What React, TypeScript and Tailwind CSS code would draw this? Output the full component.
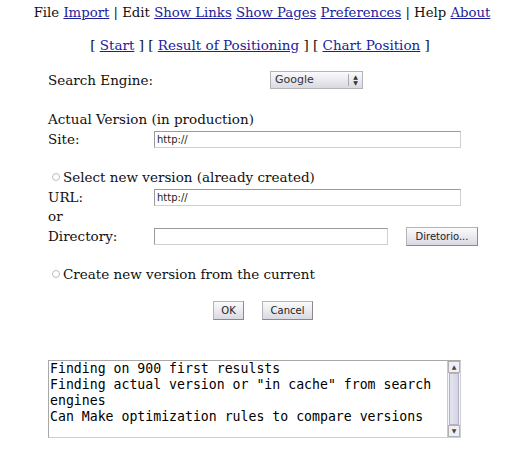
import React from "react";

const serif = "font-['DejaVu_Serif','Liberation_Serif',serif]";
const ui = "font-['DejaVu_Sans',sans-serif]";

function Field({ width, value }: { width: string; value?: string }) {
  return (
    <div
      className={`${width} h-[17px] border border-[#9a9a9a] border-r-[#d0d0d0] border-b-[#d0d0d0] bg-white px-[2px] text-[10px] leading-[15px] text-[#222] ${ui}`}
    >
      {value}
    </div>
  );
}

function Btn({ label, width }: { label: string; width: string }) {
  return (
    <div
      className={`${width} h-[19px] flex items-center justify-center border border-[#b4b4b4] border-b-[#8a8a8a] border-r-[#8a8a8a] bg-gradient-to-b from-[#fbfbfd] to-[#d9d9e2] text-[10px] text-[#222] ${ui}`}
    >
      {label}
    </div>
  );
}

function Radio() {
  return (
    <span className="inline-block ml-[4px] mr-[3px] w-[8px] h-[8px] rounded-full border border-[#bdbdbd] bg-white" />
  );
}

export default function App() {
  const link = "text-[#1c1c9c] underline";
  return (
    <div className={`w-[520px] h-[462px] bg-white text-[13.5px] text-[#111] ${serif}`}>
      <div className="pt-[4px] h-[20px] leading-[18px] text-center text-[13.25px] pl-[4px]">
        File <span className={link}>Import</span> | Edit <span className={link}>Show Links</span>{" "}
        <span className={link}>Show Pages</span> <span className={link}>Preferences</span> | Help{" "}
        <span className={link}>About</span>
      </div>
      <div className="mt-[16px] leading-[18px] text-center">
        [ <span className={link}>Start</span> ] [ <span className={link}>Result of Positioning</span> ] [{" "}
        <span className={link}>Chart Position</span> ]
      </div>

      <div className="pl-[48px]">
        <div className="mt-[17px] flex items-center h-[18px]">
          <span className="w-[222px]">Search Engine:</span>
          <div
            className={`w-[93px] h-[18px] flex items-stretch border border-[#b4b4b4] bg-gradient-to-b from-[#fbfbfd] to-[#d9d9e2] text-[11px] text-[#333] ${ui}`}
          >
            <span className="flex-1 pl-[4px] leading-[16px]">Google</span>
            <span className="w-[14px] border-l border-[#aaa] my-[2px] flex flex-col items-center justify-center text-[6px] leading-[6px] text-[#333]">
              <span>▲</span>
              <span>▼</span>
            </span>
          </div>
        </div>

        <div className="mt-[20px] leading-[20px]">Actual Version (in production)</div>
        <div className="flex items-center h-[20px]">
          <span className="w-[106px]">Site:</span>
          <Field width="w-[307px]" value="http://" />
        </div>

        <div className="mt-[18px] flex items-center h-[20px]">
          <Radio />
          <span>Select new version (already created)</span>
        </div>
        <div className="flex items-center h-[20px]">
          <span className="w-[106px]">URL:</span>
          <Field width="w-[307px]" value="http://" />
        </div>
        <div className="h-[19px] leading-[19px]">or</div>
        <div className="flex items-center h-[20px]">
          <span className="w-[106px]">Directory:</span>
          <Field width="w-[234px]" />
          <div className="ml-[18px]">
            <Btn label="Diretorio..." width="w-[72px]" />
          </div>
        </div>

        <div className="mt-[18px] flex items-center h-[20px]">
          <Radio />
          <span>Create new version from the current</span>
        </div>
      </div>

      <div className="mt-[17px] flex justify-center gap-[18px] pl-[6px]">
        <Btn label="OK" width="w-[31px]" />
        <Btn label="Cancel" width="w-[51px]" />
      </div>

      <div className="mt-[40px] ml-[48px] w-[413px] h-[78px] flex border border-[#a8a8a8] border-r-[#d0d0d0] border-b-[#d0d0d0] bg-white">
        <div className="flex-1 pl-[1px] font-['DejaVu_Sans_Mono',monospace] text-[13.2px] leading-[16px] text-black">
          <div>Finding on 900 first resulsts</div>
          <div>Finding actual version or "in cache" from search</div>
          <div>engines</div>
          <div>Can Make optimization rules to compare versions</div>
        </div>
        <div className="w-[13px] flex flex-col border-l border-[#c8c8c8] bg-[#f4f4f6]">
          <div className="h-[12px] border border-[#b0b0b8] bg-[#f0f0f4] flex items-center justify-center text-[6px] leading-none text-[#444]">▲</div>
          <div className="flex-1 mx-[1px] border border-[#b0b0c8] bg-gradient-to-r from-[#e4e4f0] to-[#d4d4e6]" />
          <div className="h-[12px] border border-[#b0b0b8] bg-[#f0f0f4] flex items-center justify-center text-[6px] leading-none text-[#444]">▼</div>
        </div>
      </div>
    </div>
  );
}
